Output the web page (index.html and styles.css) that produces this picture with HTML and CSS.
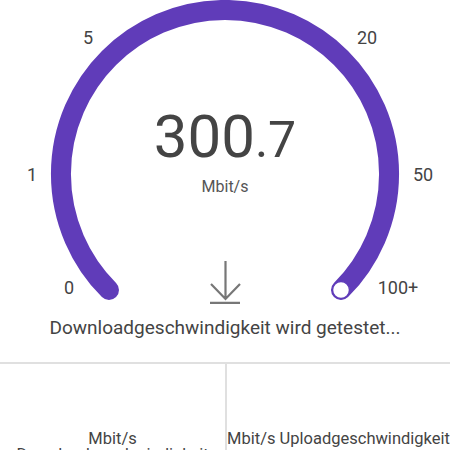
FILE: index.html
```html
<!DOCTYPE html>
<html>
<head>
	<title>Speedtest</title>
	<link rel="stylesheet" href="styles.css">
</head>
<body>
	<div class="gauge">
		<svg class="dial" width="450" height="306" viewBox="0 0 450 306">
			<path d="M 109 290 A 164 164 0 1 1 341 290" fill="none" stroke="#603cb9" stroke-width="20" stroke-linecap="round"/>
			<circle cx="341" cy="290" r="8.5" fill="#fff" stroke="#603cb9" stroke-width="1.5"/>
		</svg>
		<span class="tick" style="left: 69px; top: 288px">0</span>
		<span class="tick" style="left: 32px; top: 175px">1</span>
		<span class="tick" style="left: 88px; top: 38px">5</span>
		<span class="tick" style="left: 367px; top: 38px">20</span>
		<span class="tick" style="left: 423px; top: 175px">50</span>
		<span class="tick" style="left: 398px; top: 288px">100+</span>

		<div class="readout">
			<div class="value">300<span class="decimal">.7</span></div>
			<div class="unit">Mbit/s</div>
		</div>
		<svg class="arrow" width="32" height="44" viewBox="0 0 32 44">
			<path d="M16.5 1 V39 M2 24 L16.5 39 L31 24" fill="none" stroke="#777" stroke-width="2.2"/>
			<path d="M1 43 H31" stroke="#777" stroke-width="2.5"/>
		</svg>
	</div>

	<div class="status">Downloadgeschwindigkeit wird getestet...</div>

	<div class="results">
		<div class="result">
			<div class="result-label">Mbit/s Downloadgeschwindigkeit</div>
		</div>
		<div class="result">
			<div class="result-label">Mbit/s Uploadgeschwindigkeit</div>
		</div>
	</div>
</body>
</html>
```

FILE: styles.css
```css
body {
	margin: 0;
	font-family: Roboto, "Liberation Sans", sans-serif;
	background-color: white;
	color: #444;
	overflow: hidden;
}
.gauge {
	position: relative;
	width: 450px;
	height: 316px;
}
.dial {
	position: absolute;
	left: 0;
	top: 0;
}
.tick {
	position: absolute;
	transform: translate(-50%, -50%);
	font-size: 18px;
	line-height: 1;
	color: #444;
}
.readout {
	position: relative;
	padding-top: 107px;
	text-align: center;
}
.value {
	font-size: 60px;
	line-height: 60px;
	color: #444;
}
.decimal {
	font-size: 50px;
	line-height: 1;
}
.unit {
	margin-top: 10px;
	font-size: 16px;
	line-height: 20px;
	color: #555;
}
.arrow {
	position: relative;
	display: block;
	margin: 63px auto 0;
}
.status {
	font-size: 19px;
	line-height: 24px;
	text-align: center;
	margin-bottom: 22px;
}
.results {
	display: grid;
	grid-template-columns: 1fr 1fr;
	border-top: 2px solid #e0e0e0;
	height: 86px;
	overflow: hidden;
}
.result {
	padding-top: 67px;
	text-align: center;
	font-size: 16.5px;
	line-height: 16px;
}
.result + .result {
	border-left: 2px solid #e0e0e0;
}
```
